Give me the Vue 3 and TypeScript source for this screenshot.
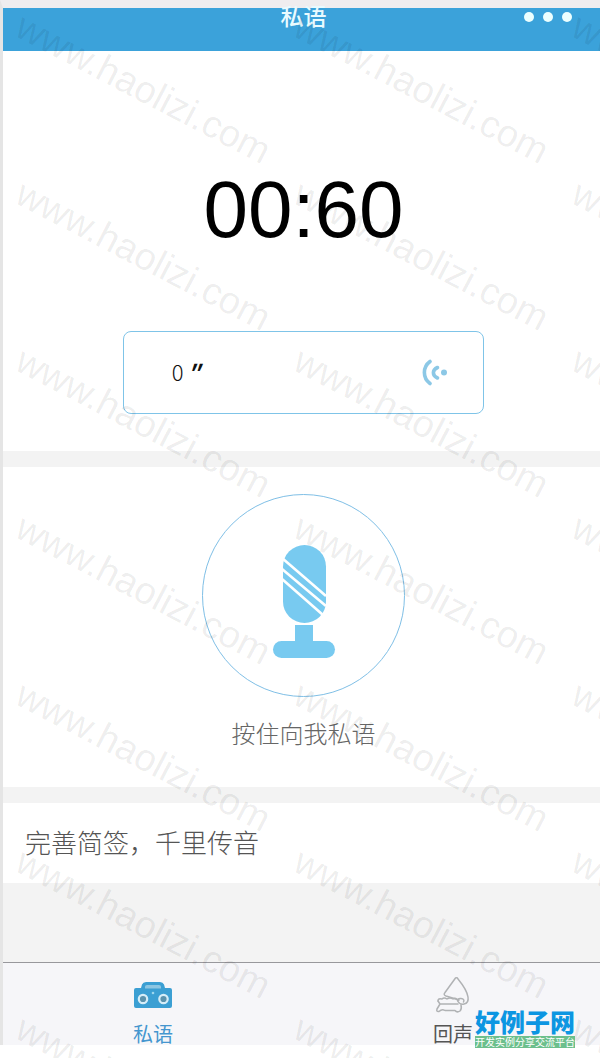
<script setup lang="ts">
interface Mark {
  x: number
  y: number
}

const marks: Mark[] = []
for (let row = 0; row < 7; row++) {
  for (let col = 0; col < 3; col++) {
    marks.push({ x: 13 + col * 278, y: 35 + row * 167 })
  }
}
</script>

<template>
  <div class="page">
    <div class="screen">
      <header class="bar">
        <h1 class="title">私语</h1>
        <button class="more" type="button" aria-label="更多">
          <span class="dot"></span>
          <span class="dot"></span>
          <span class="dot"></span>
        </button>
      </header>

      <main class="content">
        <section class="panel timer">
          <div class="clock">00:60</div>
          <button class="clip" type="button">
            <span class="length">0<i class="seconds">″</i></span>
            <svg class="wave" viewBox="0 0 28 28" aria-hidden="true">
              <path d="M9 2.500C1.500 8 1.500 19 9 24.500" fill="none" stroke="#8cc8e6" stroke-width="3.600" stroke-linecap="round" />
              <path d="M16.500 8.500C11 11 11 16.500 16.500 19" fill="none" stroke="#8cc8e6" stroke-width="3.600" stroke-linecap="round" />
              <circle cx="23" cy="13.500" r="3" fill="#8cc8e6" />
            </svg>
          </button>
        </section>

        <section class="panel record">
          <button id="talk" class="talk" type="button" aria-labelledby="talk-label">
            <svg class="mic" viewBox="0 0 64 114" aria-hidden="true">
              <rect x="11" y="1" width="43" height="78" rx="21.500" fill="#78caf0" />
              <path d="M10 14L54 52M10 25L54 62M10 35L51 71" stroke="#fff" stroke-width="2.600" />
              <rect x="23" y="81" width="18" height="20" fill="#78caf0" />
              <rect x="1" y="97" width="62" height="17" rx="8.500" fill="#78caf0" />
            </svg>
          </button>
          <label id="talk-label" class="hint" for="talk">按住向我私语</label>
        </section>

        <section class="panel motto">
          <p class="motto-text">完善简签，千里传音</p>
        </section>
      </main>

      <nav class="tabs">
        <a class="tab active" href="#whisper">
          <svg class="tab-icon" viewBox="0 0 40 36" aria-hidden="true">
            <path d="M8 7L9 3.500Q10 1 13 1H27Q30 1 31 3.500L32 7H37Q39 7 39 9V25Q39 27 37 27H3Q1 27 1 25V9Q1 7 3 7Z" fill="#3b9fd3" />
            <path d="M12 7.500V5.500Q12 4 14 4H26Q28 4 28 5.500V7.500Z" fill="#8dc6e2" />
            <circle cx="10" cy="18" r="4.200" fill="#5b93ad" stroke="#d5edf8" stroke-width="2.200" />
            <circle cx="30.500" cy="18" r="4.200" fill="#5b93ad" stroke="#d5edf8" stroke-width="2.200" />
            <circle cx="20" cy="12" r="1.300" fill="#9bd6ee" />
          </svg>
          <span>私语</span>
        </a>
        <a class="tab" href="#echo">
          <svg class="tab-icon" viewBox="0 0 40 36" aria-hidden="true">
            <g fill="none" stroke="#b0b2b4" stroke-width="1.500" stroke-linejoin="round" stroke-linecap="round">
              <path d="M22.500 -3L12 11.500Q10 14 13 15L26 19M22.500 -3Q24 -4 25 -2Q34 9 35 16Q36 22 31 23Q27 24 25 20.500Q24 17 28 17.500Q32 18 30.500 21" />
              <path d="M5 20Q5 17 9 18Q11 16 14 18Q17 16 20 18Q23 16 25 20" />
              <path d="M5 20L7 23L4 28Q3 31 6 30.500Q9 27.500 12 29.500H22Q24 32 27 30Q29 28 28 24M7 23H25" />
            </g>
          </svg>
          <span>回声</span>
        </a>
      </nav>
    </div>

    <svg class="marks" aria-hidden="true">
      <text v-for="(m, i) in marks" :key="i" :transform="`translate(${m.x} ${m.y}) rotate(27.500)`">www.haolizi.com</text>
    </svg>

    <div class="brand">
      <strong class="brand-name">好例子网</strong>
      <span class="brand-line">开发实例分享交流平台</span>
    </div>
  </div>
</template>

<style>
body {
  margin: 0;
  background: #fff;
}
</style>

<style scoped>
.page {
  position: relative;
  box-sizing: border-box;
  min-height: 100vh;
  padding-bottom: 13px;
  display: flex;
  overflow: hidden;
  font-family: "Liberation Sans", "Noto Sans CJK SC", sans-serif;
}

.screen {
  flex: 1;
  display: flex;
  flex-direction: column;
  border-top: 8px solid #efedef;
  border-left: 3px solid #e5e5e5;
  background: #f3f3f3;
}

button {
  padding: 0;
  font: inherit;
  cursor: pointer;
}

.bar {
  height: 43px;
  padding-left: 4px;
  display: grid;
  grid-template-columns: 1fr auto 1fr;
  align-items: start;
  background: #3ba2da;
}

.title {
  grid-column: 2;
  margin: 0;
  font-size: 23px;
  line-height: 18px;
  font-weight: 500;
  color: #e9fbff;
}

.more {
  justify-self: end;
  height: 18px;
  margin-right: 28px;
  display: flex;
  align-items: center;
  gap: 9px;
  border: 0;
  background: none;
}

.dot {
  width: 10px;
  height: 10px;
  border-radius: 50%;
  background: #ecffff;
}

.content {
  flex: 1;
  display: flex;
  flex-direction: column;
  gap: 16px;
}

.panel {
  display: flex;
  flex-direction: column;
  align-items: center;
  background: #fff;
}

.timer {
  padding: 113px 0 37px 4px;
  gap: 75px;
}

.clock {
  font-size: 80px;
  line-height: 92px;
  color: #000;
}

.clip {
  box-sizing: border-box;
  width: 61%;
  height: 83px;
  padding: 0 34px 0 48px;
  display: flex;
  align-items: center;
  justify-content: space-between;
  border: 1px solid #7fc4e8;
  border-radius: 8px;
  background: #fff;
}

.length {
  padding-bottom: 4px;
  font-family: "Noto Sans CJK SC", sans-serif;
  font-size: 22px;
  font-weight: 300;
  color: #111;
}

.seconds {
  margin-left: 4px;
  font-weight: 700;
}

.wave {
  width: 28px;
  height: 28px;
}

.record {
  padding: 27px 0 35px 4px;
  gap: 20px;
}

.talk {
  box-sizing: border-box;
  width: 203px;
  height: 203px;
  display: flex;
  align-items: center;
  justify-content: center;
  border: 1px solid #7fbfe6;
  border-radius: 50%;
  background: #fff;
}

.mic {
  width: 64px;
  height: 114px;
  margin-top: 10px;
}

.hint {
  font-size: 24px;
  line-height: 35px;
  font-weight: 300;
  color: #666;
}

.motto {
  align-items: stretch;
  padding: 21px 22px 19px;
}

.motto-text {
  margin: 0;
  font-size: 26px;
  line-height: 40px;
  font-weight: 300;
  color: #555;
}

.tabs {
  height: 82px;
  margin-right: -3px;
  display: flex;
  border-top: 1px solid #98989c;
  background: #f6f6f9;
}

.tab {
  flex: 1;
  padding-top: 18px;
  display: flex;
  flex-direction: column;
  align-items: center;
  gap: 4px;
  font-size: 20px;
  line-height: 28px;
  color: #555;
  text-decoration: none;
}

.active {
  color: #4596cf;
}

.tab-icon {
  width: 40px;
  height: 36px;
  overflow: visible;
}

.marks {
  position: absolute;
  inset: 0;
  width: 100%;
  height: 100%;
  pointer-events: none;
  font-family: "Liberation Sans", sans-serif;
  font-size: 38px;
  fill: rgba(0, 0, 0, 0.075);
}

.brand {
  position: absolute;
  right: 25px;
  bottom: 10px;
  display: flex;
  flex-direction: column;
  align-items: center;
  font-family: "Noto Sans CJK SC", sans-serif;
}

.brand-name {
  font-size: 25px;
  line-height: 29px;
  font-weight: 900;
  color: #0c96e2;
}

.brand-line {
  font-size: 10px;
  line-height: 12px;
  color: #fff;
  background: #6cbf8c;
}
</style>
